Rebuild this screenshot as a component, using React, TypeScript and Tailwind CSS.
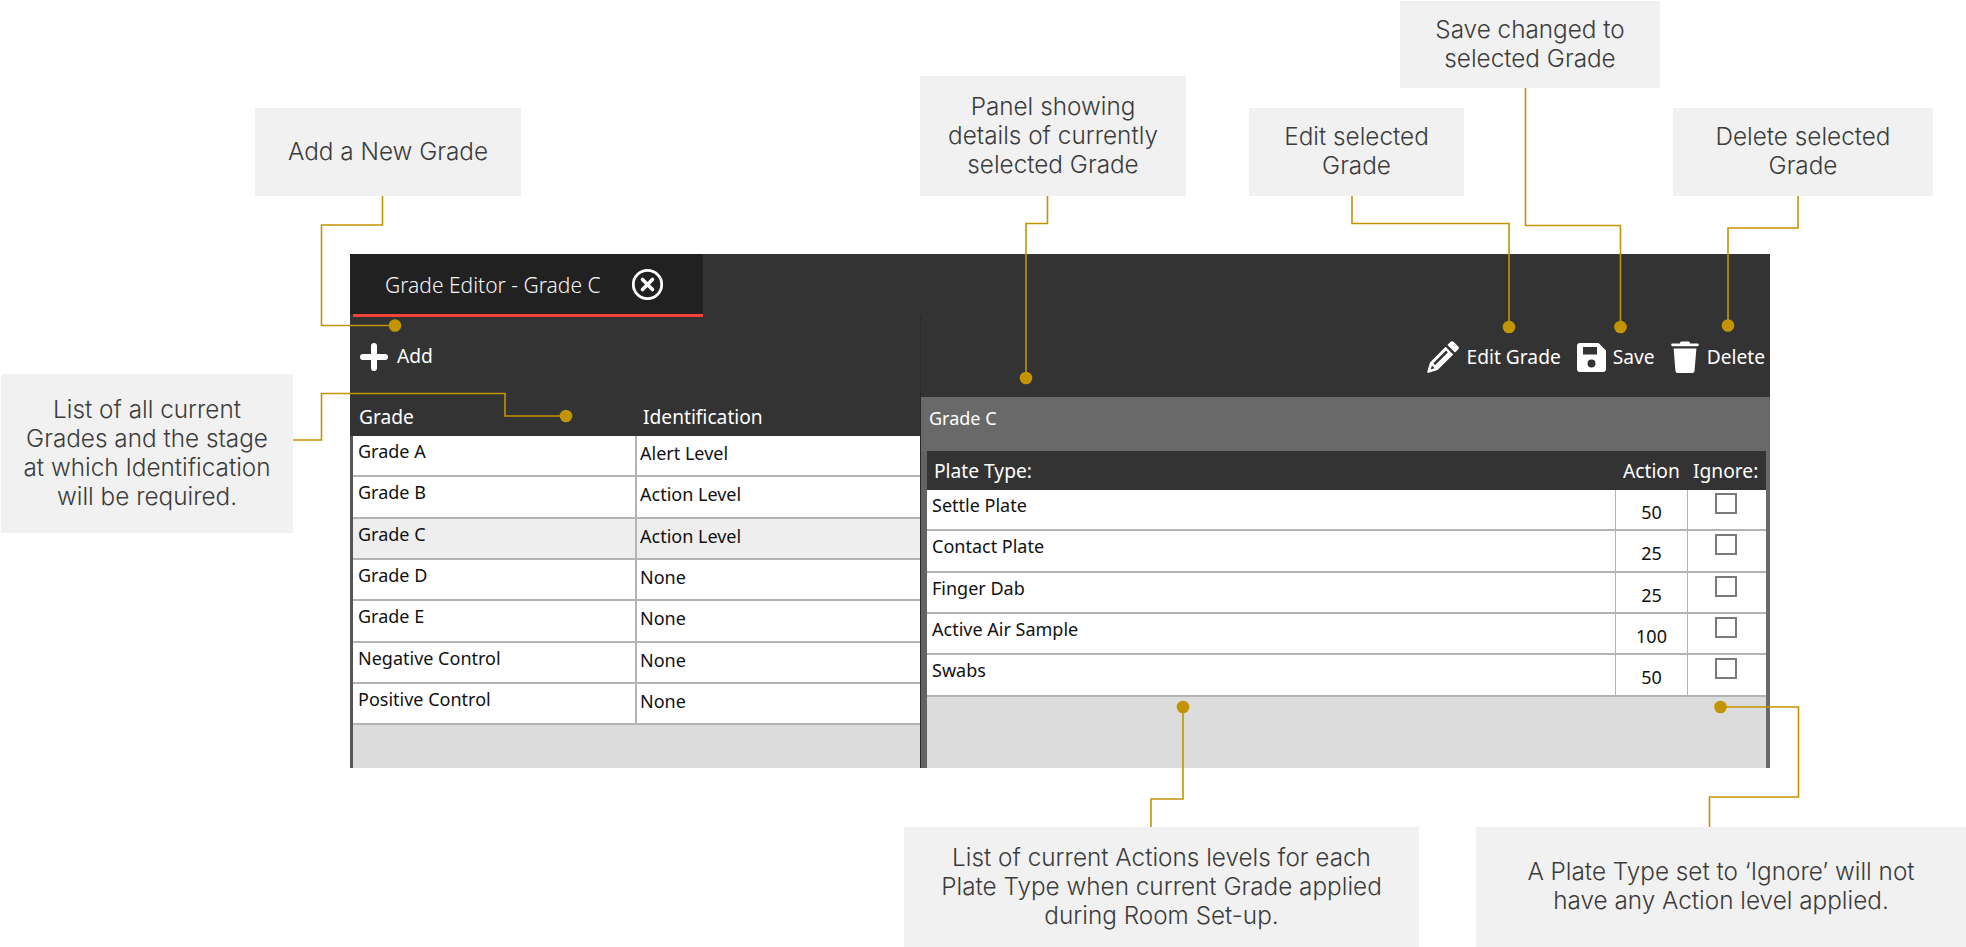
const font = "font-['Noto_Sans','Open_Sans',sans-serif]";

type CalloutProps = {
  className: string;
  lines: string[];
};

const Callout = ({ className, lines }: CalloutProps) => (
  <div className={`absolute flex flex-col items-center justify-center bg-[#f1f1f1] pb-[2px] text-center font-['Inter',sans-serif] text-[24.3px] font-light leading-[29px] text-[#3c3c3c] ${className}`}>
    {lines.map((line) => (
      <span key={line}>{line}</span>
    ))}
  </div>
);

// connectors: [path, dot x, dot y]
const connectors: [string, number, number][] = [
  ["M382.5 196V225H321.5V325.5H395", 395, 325.5],
  ["M293 440H321.5V393.5H505V416H566", 566, 416],
  ["M1047.5 195V223.5H1026V378", 1026, 378],
  ["M1352 195V223.5H1509V327", 1509, 327],
  ["M1525.5 88V225.5H1620.5V327", 1620.5, 327],
  ["M1798 195V228H1728V325.5", 1728, 325.5],
  ["M1183 707V799H1151V828", 1183, 707],
  ["M1720.5 707H1798.5V797H1709.5V828", 1720.5, 707],
];

const Connectors = () => (
  <svg className="absolute left-0 top-0" width={1966} height={947} viewBox="0 0 1966 947" fill="none">
    {connectors.map(([d, x, y]) => (
      <g key={d}>
        <path d={d} stroke="#c29400" strokeWidth={1.6} />
        <circle cx={x} cy={y} r={6.3} fill="#c29400" />
      </g>
    ))}
  </svg>
);

const CloseIcon = () => (
  <svg width={33} height={33} viewBox="0 0 33 33" fill="none">
    <circle cx={16.5} cy={16.5} r={14.2} stroke="#fff" strokeWidth={2.8} />
    <path d="M11.5 11.5L21.5 21.5M21.5 11.5L11.5 21.5" stroke="#fff" strokeWidth={3.6} strokeLinecap="round" />
  </svg>
);

const PlusIcon = () => (
  <svg width={28} height={28} viewBox="0 0 28 28" fill="none">
    <path d="M14 3V25M3 14H25" stroke="#fff" strokeWidth={6} strokeLinecap="round" />
  </svg>
);

const PencilIcon = () => (
  <svg width={32} height={32} viewBox="0 0 32 32" fill="#fff">
    <path d="M23.4 1a2.4 2.4 0 0 1 3.4 0l4.2 4.2a2.4 2.4 0 0 1 0 3.4l-3 3-7.6-7.6z" />
    <path fillRule="evenodd" d="M18.6 5.8L26.2 13.4 10.6 29 1.6 31.8a1 1 0 0 1-1.3-1.3L3 21.4zM19 9.6L6.4 22.2l1.8 1.8 12.6-12.6zM5 24.6L3.6 28.6 7.6 27.2z" />
  </svg>
);

const SaveIcon = () => (
  <svg width={29} height={29} viewBox="0 0 29 29" fill="none">
    <path fill="#fff" fillRule="evenodd" d="M3 0H21.5L29 7.5V26a3 3 0 0 1-3 3H3a3 3 0 0 1-3-3V3a3 3 0 0 1 3-3zM6 4V11.5H20V4zM14.5 16.5a4 4 0 1 0 0 8 4 4 0 0 0 0-8z" />
  </svg>
);

const TrashIcon = () => (
  <svg width={28} height={32} viewBox="0 0 28 32" fill="#fff">
    <path d="M10.5 0.5H17.5A1.5 1.5 0 0 1 19 2V2.5H26.5A1.3 1.3 0 0 1 26.5 5.2H1.5A1.3 1.3 0 0 1 1.5 2.5H9V2A1.5 1.5 0 0 1 10.5 0.5Z" />
    <path d="M2.6 7.5H25.4L23.6 29.2A2.8 2.8 0 0 1 20.8 32H7.2A2.8 2.8 0 0 1 4.4 29.2Z" />
  </svg>
);

const grades = [
  ["Grade A", "Alert Level"],
  ["Grade B", "Action Level"],
  ["Grade C", "Action Level"],
  ["Grade D", "None"],
  ["Grade E", "None"],
  ["Negative Control", "None"],
  ["Positive Control", "None"],
];

const plates = [
  ["Settle Plate", "50"],
  ["Contact Plate", "25"],
  ["Finger Dab", "25"],
  ["Active Air Sample", "100"],
  ["Swabs", "50"],
];

const GradeEditor = () => (
  <div className={`absolute left-[350px] top-[254px] flex h-[514px] w-[1420px] flex-col bg-[#333333] text-white ${font}`}>
    <div className="flex h-[63px] w-[353px] flex-col">
      <div className="flex h-[60px] items-center bg-[#212121] pl-[35px]">
        <span className="w-[246px] pt-[3px] text-[21px] font-light text-[#f5f5f5]">Grade Editor - Grade C</span>
        <CloseIcon />
      </div>
      <div className="ml-[3px] h-[3px] bg-[#f44336]" />
    </div>
    <div className="flex min-h-0 flex-1">
      <div className="flex w-[570px] flex-col">
        <div className="flex h-[80px] items-center gap-[9px] pl-[10px] text-[19.2px]">
          <PlusIcon />
          <span className="pb-[1px]">Add</span>
        </div>
        <div className="flex h-[39px] items-center pt-[1px] text-[19.2px]">
          <span className="w-[293px] pl-[9px]">Grade</span>
          <span>Identification</span>
        </div>
        <div className="flex flex-1 flex-col border-l-[3px] border-[#555555] bg-[#dcdcdc] text-[18px] leading-[26px] text-[#111111]">
          {grades.map(([grade, level]) => (
            <div key={grade} className={`flex h-[41.33px] border-b-2 border-[#b4b4b4] ${grade === "Grade C" ? "bg-[#eeeeee]" : "bg-white"}`}>
              <span className="w-[284px] border-r-2 border-[#b4b4b4] pl-[5px] pt-[2px]">{grade}</span>
              <span className="pl-[3px] pt-[4px]">{level}</span>
            </div>
          ))}
        </div>
      </div>
      <div className="flex flex-1 flex-col border-l border-[#2a2a2a]">
        <div className="flex h-[80px] items-center justify-end pr-[5px] text-[19.2px]">
          <PencilIcon />
          <span className="ml-[8px]">Edit Grade</span>
          <span className="ml-[16px]"><SaveIcon /></span>
          <span className="ml-[7px]">Save</span>
          <span className="ml-[16px]"><TrashIcon /></span>
          <span className="ml-[8px]">Delete</span>
        </div>
        <div className="h-[54px] bg-[#696969] pl-[8px] pt-[8px] text-[18px] leading-[26px]">Grade C</div>
        <div className="flex min-h-0 flex-1 flex-col border-l-[6px] border-r-[4px] border-l-[#636363] border-r-[#696969]">
          <div className="flex h-[39px] items-center bg-[#333333] pt-[1px] text-[19.2px]">
            <span className="flex-1 pl-[7px]">Plate Type:</span>
            <span className="w-[72px] pl-[8px]">Action</span>
            <span className="w-[79px] pl-[6px]">Ignore:</span>
          </div>
          <div className="flex flex-1 flex-col bg-[#dcdcdc] text-[18px] leading-[26px] text-[#111111]">
            {plates.map(([plate, action]) => (
              <div key={plate} className="flex h-[41.33px] border-b-2 border-[#b4b4b4] bg-white">
                <span className="flex-1 pl-[5px] pt-[2px]">{plate}</span>
                <span className="w-[72px] border-l border-[#b4b4b4] pt-[9px] text-center">{action}</span>
                <span className="w-[79px] border-l border-[#b4b4b4] pl-[27px] pt-[3px]">
                  <span className="block h-[21px] w-[22px] border-2 border-[#7a7a7a] bg-white" />
                </span>
              </div>
            ))}
          </div>
        </div>
      </div>
    </div>
  </div>
);

export default function App() {
  return (
    <div className="relative h-[947px] w-[1966px] overflow-hidden bg-white">
      <GradeEditor />
      <Connectors />
      <Callout className="left-[255px] top-[108px] h-[88px] w-[266px]" lines={["Add a New Grade"]} />
      <Callout className="left-[1px] top-[374px] h-[159px] w-[292px]" lines={["List of all current", "Grades and the stage", "at which Identification", "will be required."]} />
      <Callout className="left-[920px] top-[76px] h-[120px] w-[266px]" lines={["Panel showing", "details of currently", "selected Grade"]} />
      <Callout className="left-[1249px] top-[108px] h-[88px] w-[215px]" lines={["Edit selected", "Grade"]} />
      <Callout className="left-[1400px] top-[1px] h-[87px] w-[260px]" lines={["Save changed to", "selected Grade"]} />
      <Callout className="left-[1673px] top-[108px] h-[88px] w-[260px]" lines={["Delete selected", "Grade"]} />
      <Callout className="left-[904px] top-[827px] h-[120px] w-[515px]" lines={["List of current Actions levels for each", "Plate Type when current Grade applied", "during Room Set-up."]} />
      <Callout className="left-[1476px] top-[827px] h-[120px] w-[490px]" lines={["A Plate Type set to ‘Ignore’ will not", "have any Action level applied."]} />
    </div>
  );
}
